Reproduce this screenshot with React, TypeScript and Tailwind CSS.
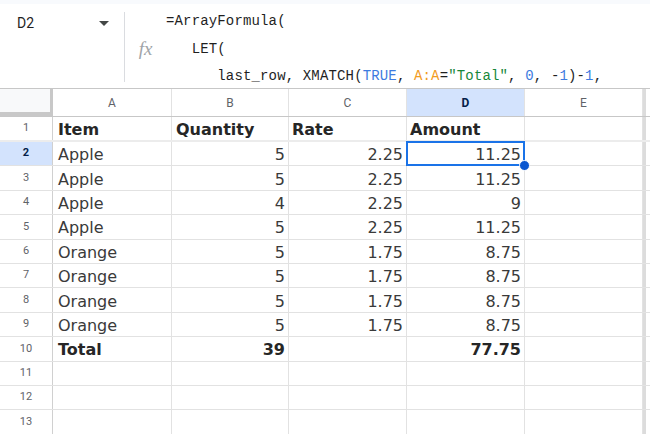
import React from 'react';

interface RowData {
  item: string;
  qty: string;
  rate: string;
  amount: string;
  bold?: boolean;
}

const rows: RowData[] = [
  { item: 'Item', qty: 'Quantity', rate: 'Rate', amount: 'Amount', bold: true },
  { item: 'Apple', qty: '5', rate: '2.25', amount: '11.25' },
  { item: 'Apple', qty: '5', rate: '2.25', amount: '11.25' },
  { item: 'Apple', qty: '4', rate: '2.25', amount: '9' },
  { item: 'Apple', qty: '5', rate: '2.25', amount: '11.25' },
  { item: 'Orange', qty: '5', rate: '1.75', amount: '8.75' },
  { item: 'Orange', qty: '5', rate: '1.75', amount: '8.75' },
  { item: 'Orange', qty: '5', rate: '1.75', amount: '8.75' },
  { item: 'Orange', qty: '5', rate: '1.75', amount: '8.75' },
  { item: 'Total', qty: '39', rate: '', amount: '77.75', bold: true },
  { item: '', qty: '', rate: '', amount: '' },
  { item: '', qty: '', rate: '', amount: '' },
  { item: '', qty: '', rate: '', amount: '' },
];

const cell = 'h-full border-r border-[#e2e2e2] flex items-center whitespace-nowrap';

const App: React.FC = () => {
  return (
    <div className="w-[650px] h-[434px] overflow-hidden bg-white relative">
      <div className="h-[4px] bg-[#f8fafd]" />

      {/* formula bar */}
      <div className="flex h-[85px] border-b border-[#c7c7c7]">
        <div className="w-[124px] flex items-start pt-[8px] pl-[17px] pr-[15px] justify-between font-['Roboto',sans-serif] text-[14px] text-[#1f1f1f] leading-[22px]">
          <span>D2</span>
          <span className="mt-[9px] w-0 h-0 border-l-[5px] border-r-[5px] border-t-[5px] border-l-transparent border-r-transparent border-t-[#444746]" />
        </div>
        <div className="w-px bg-[#dadce0] mt-[8px] mb-[6px]" />
        <div className="w-[41px] flex items-center justify-center">
          <span className="font-['Liberation_Serif',serif] italic text-[19px] text-[#a0a4a8] mt-[6px]">fx</span>
        </div>
        <div className="font-['Liberation_Mono',monospace] text-[14px] tracking-[0.15px] leading-[27.5px] text-[#1f1f1f] whitespace-pre pt-[4px]">
          <div>=ArrayFormula(</div>
          <div>{'   LET('}</div>
          <div>
            {'      last_row, XMATCH('}
            <span className="text-[#3d7be0]">TRUE</span>
            {', '}
            <span className="text-[#f29c1f]">A:A</span>
            {'='}
            <span className="text-[#17873a]">"Total"</span>
            {', '}
            <span className="text-[#3d7be0]">0</span>
            {', -'}
            <span className="text-[#3d7be0]">1</span>
            {')-'}
            <span className="text-[#3d7be0]">1</span>
            {','}
          </div>
        </div>
      </div>

      {/* grid */}
      <div className="font-['DejaVu_Sans',sans-serif]">
        <div className="flex h-[28px] border-b border-[#c7c7c7] text-[12px] text-[#5f6368] font-['Roboto',sans-serif]">
          <div className="w-[53px] h-full bg-[#f8f9fa] border-r-[3px] border-b-[4px] border-[#c8c8c8]" />
          <div className={`${cell} w-[119px] justify-center`}>A</div>
          <div className={`${cell} w-[117px] justify-center`}>B</div>
          <div className={`${cell} w-[118px] justify-center`}>C</div>
          <div className={`${cell} w-[118px] justify-center bg-[#d3e3fd] text-[#041e49] font-bold`}>D</div>
          <div className={`${cell} w-[118px] justify-center`}>E</div>
          <div className="w-[3px] h-full bg-[#dcdcdc]" />
        </div>

        {rows.map((r, i) => {
          const n = i + 1;
          const sel = n === 2;
          const weight = r.bold ? 'font-bold text-[#262626]' : 'text-[#3a3a3a]';
          return (
            <div
              key={n}
              className={`flex text-[16px] ${n === 1 ? 'h-[25px] border-b-2 border-[#ececec]' : 'h-[24.4px] border-b border-[#e2e2e2]'}`}
            >
              <div
                className={`w-[53px] h-full flex items-center justify-center border-r border-[#d0d0d0] font-['Roboto',sans-serif] text-[11px] ${
                  sel ? 'bg-[#d3e3fd] text-[#041e49] font-bold' : 'text-[#5f6368]'
                }`}
              >
                {n}
              </div>
              <div className={`${cell} w-[119px] pl-[5px] pt-[3px] ${weight}`}>{r.item}</div>
              <div className={`${cell} w-[117px] pr-[3px] pt-[3px] ${n === 1 ? 'pl-[4px]' : 'justify-end'} ${weight}`}>{r.qty}</div>
              <div className={`${cell} w-[118px] pr-[3px] pt-[3px] ${n === 1 ? 'pl-[3px]' : 'justify-end'} ${weight}`}>{r.rate}</div>
              <div className={`${cell} w-[118px] pr-[3px] pt-[3px] ${n === 1 ? 'pl-[3px]' : 'justify-end'} ${weight} relative`}>
                {r.amount}
                {sel && (
                  <>
                    <div className="absolute -left-px -top-px -right-px -bottom-px border-2 border-[#1a73e8]" />
                    <div className="absolute -right-[6px] -bottom-[6px] w-[11px] h-[11px] rounded-full bg-[#0b57d0] border border-white z-10" />
                  </>
                )}
              </div>
              <div className={`${cell} w-[118px]`} />
              <div className="w-[3px] h-full bg-[#dcdcdc]" />
            </div>
          );
        })}
      </div>
    </div>
  );
};

export default App;
